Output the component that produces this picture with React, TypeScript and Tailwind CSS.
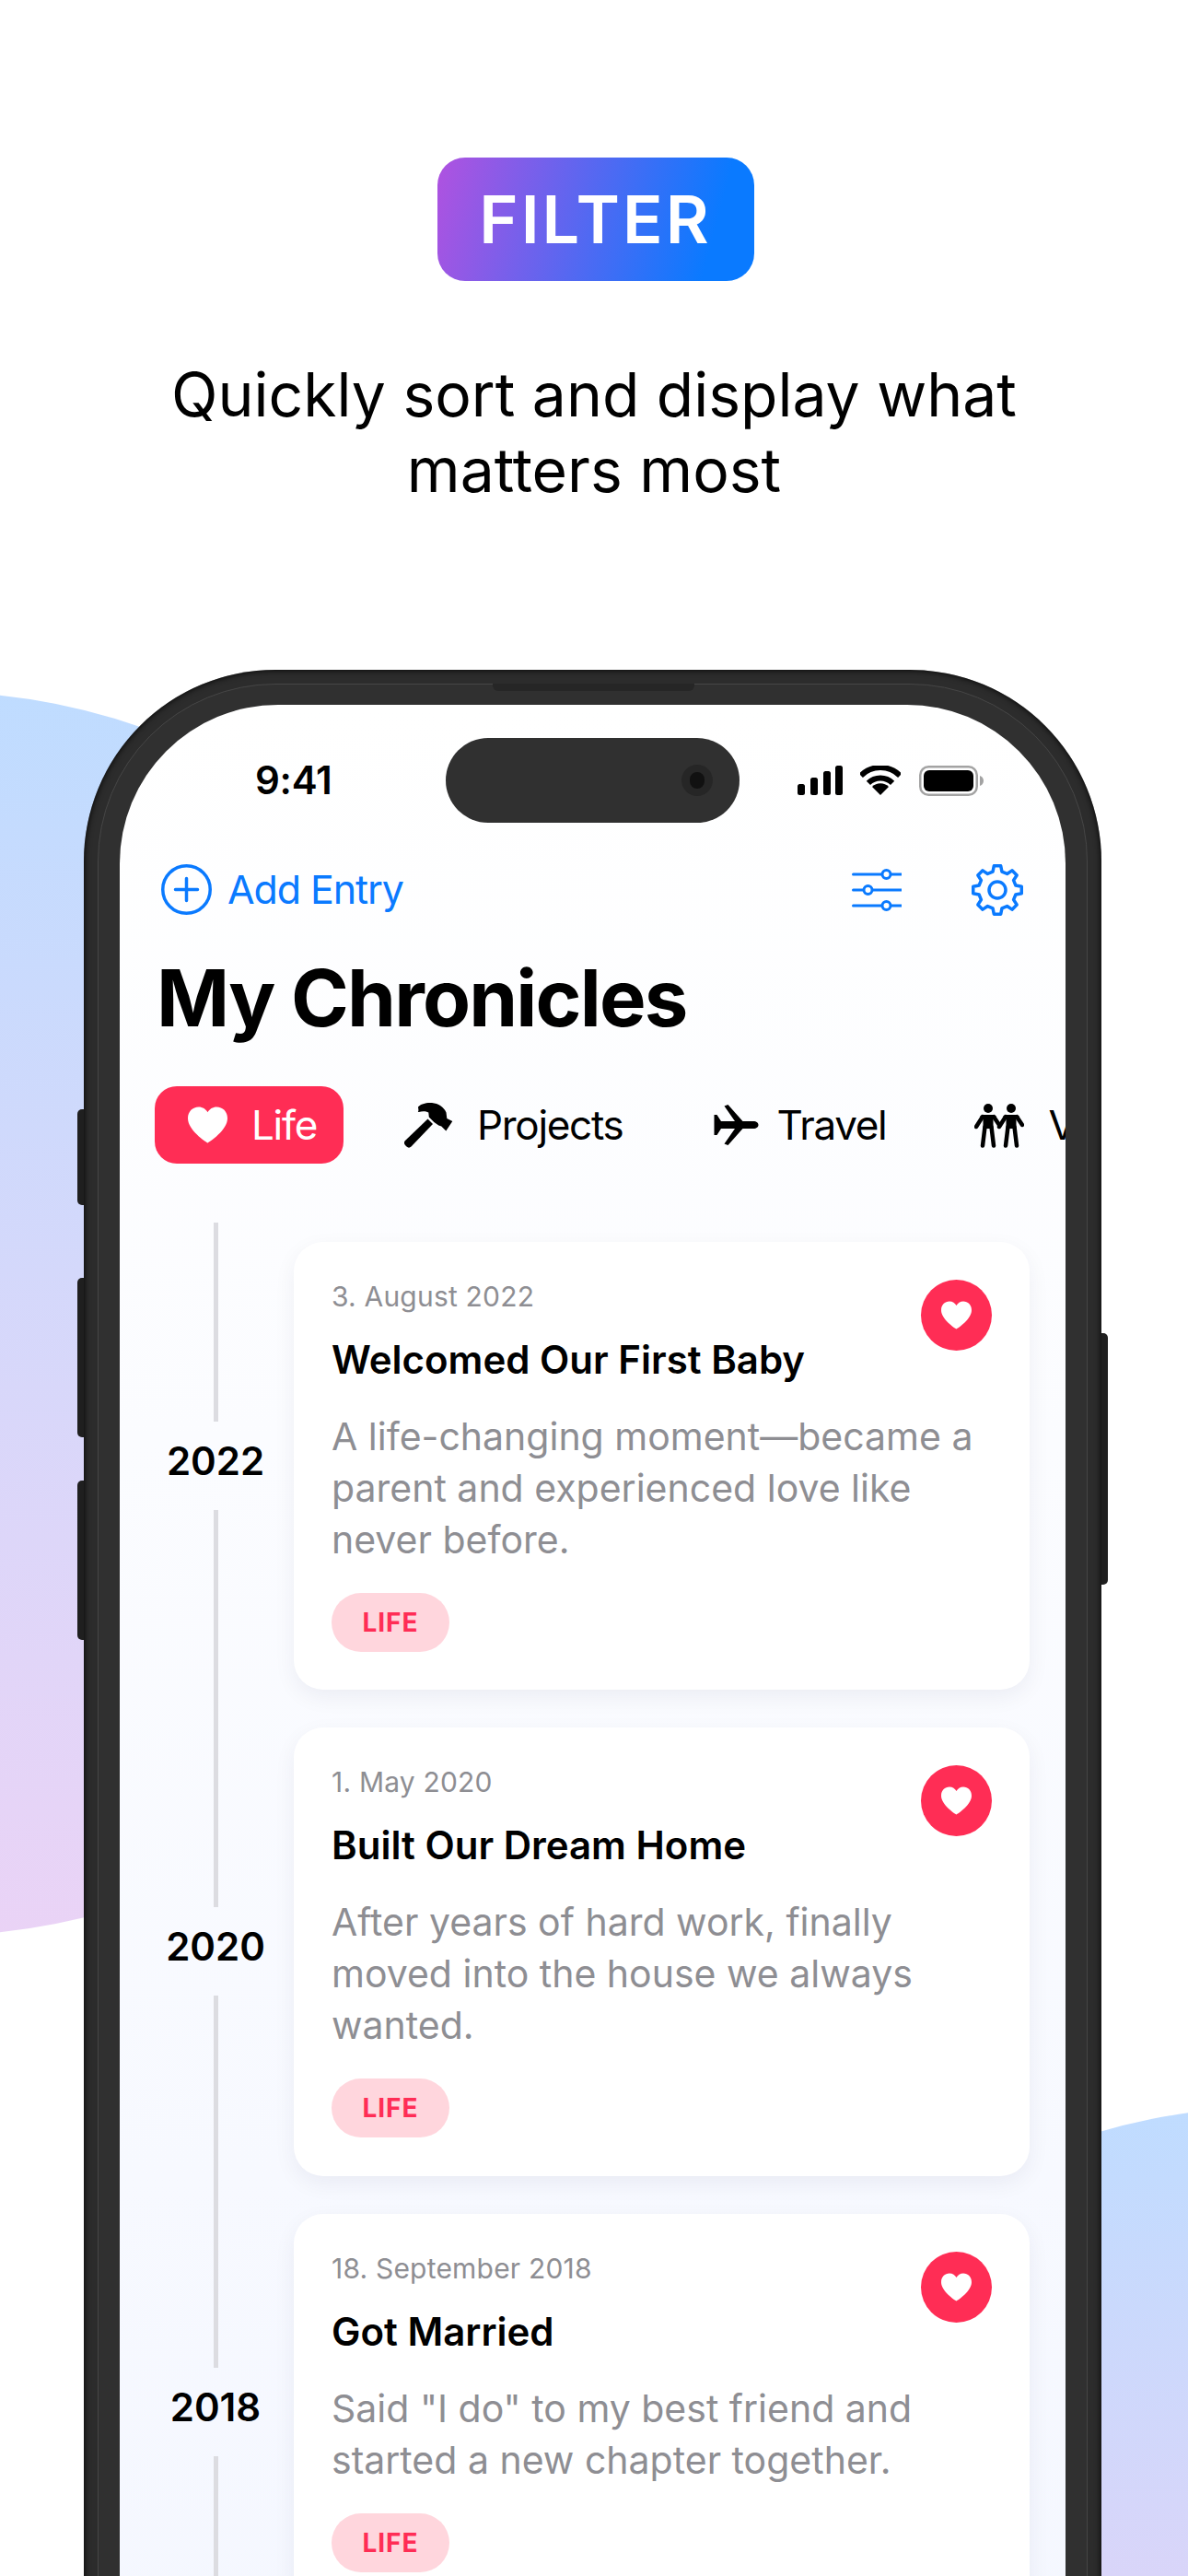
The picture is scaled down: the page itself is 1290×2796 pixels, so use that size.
const BLUE = '#0a7aff';

const entries = [
  {
    year: '2022',
    date: '3. August 2022',
    title: 'Welcomed Our First Baby',
    text: 'A life-changing moment—became a parent and experienced love like never before.',
  },
  {
    year: '2020',
    date: '1. May 2020',
    title: 'Built Our Dream Home',
    text: 'After years of hard work, finally moved into the house we always wanted.',
  },
  {
    year: '2018',
    date: '18. September 2018',
    title: 'Got Married',
    text: 'Said "I do" to my best friend and started a new chapter together.',
  },
];

function gearPath() {
  const pts: string[] = [];
  for (let i = 0; i < 8; i++) {
    const a = (i * 45 - 90) * (Math.PI / 180);
    const step = Math.PI / 180;
    const p = (r: number, d: number) => `${(29 + r * Math.cos(a + d * step)).toFixed(2)} ${(29 + r * Math.sin(a + d * step)).toFixed(2)}`;
    pts.push(`${i === 0 ? 'M' : 'L'}${p(20.5, -14)}`, `L${p(26.5, -8)}`, `L${p(26.5, 8)}`, `L${p(20.5, 14)}`);
  }
  return pts.join(' ') + ' Z';
}

function Heart({ className }: { className: string }) {
  return (
    <svg viewBox="0 0 44 40" className={className} fill="currentColor">
      <path d="M22 40C20 38.6 0 26 0 12.5 0 5 5.4 0 12 0c4.4 0 8 2.3 10 6 2-3.700 5.600-6 10-6 6.600 0 12 5 12 12.500C44 26 24 38.600 22 40Z" />
    </svg>
  );
}

function Hammer() {
  return (
    <svg viewBox="10 10 54 52" className="h-[52px] w-[54px] shrink-0" fill="black">
      <path d="M25 16.500C28 13 34 11.500 40 12c7 .6 13 4.500 15.500 10.500l.8 6.500 6 3-7 10.500-5-5-3-1-5-3.500-5.500-5.500-.5-5c-3-1.500-7-1.500-10.500-.5-1 0-1.300-1-.3-1.500Z" />
      <path d="M35.500 29.500 41 35 17.500 59.500c-1.500 1.500-3.500 1.500-5 0l-1.500-1.500c-1.500-1.500-1.500-3.500 0-5Z" />
    </svg>
  );
}

function Plane() {
  return (
    <svg viewBox="10 13 49 46" className="h-[46px] w-[49px] shrink-0" fill="black">
      <path d="M10.500 25H13.500L18 32H33L21.500 15.500 25.500 14 41.500 32H53C56.500 32 58.500 34 58.500 36S56.500 40 53 40H41.500L25.500 58 21.500 56.500 33 40H18L13.500 47H10.500Z" />
    </svg>
  );
}

function Figure({ x }: { x: number }) {
  return (
    <g transform={`translate(${x} 0)`}>
      <circle cx="0" cy="16" r="5" fill="black" />
      <path d="M-5 23H5C7 23 8 24 9 25L-1 25H-9C-8 24-7 23-5 23Z" fill="black" />
      <path d="M-5.500 24H5.500V38H-5.500Z" fill="black" />
      <path d="M-3.500 36-6 56.500M3.500 36 6 56.500M-6 25-13 36M6 25 12 34" stroke="black" strokeWidth="4.500" strokeLinecap="round" fill="none" />
    </g>
  );
}

function People() {
  return (
    <svg viewBox="8 10 54 49" className="h-[49px] w-[54px] shrink-0">
      <Figure x={23} />
      <Figure x={48} />
    </svg>
  );
}

function StatusIcons() {
  return (
    <div className="flex items-center gap-[19px]">
      <svg width="49" height="32" viewBox="0 0 49 32" fill="black">
        <rect x="0" y="20" width="8" height="12" rx="2.500" />
        <rect x="14" y="13" width="8" height="19" rx="2.500" />
        <rect x="28" y="6" width="8" height="26" rx="2.500" />
        <rect x="41" y="0" width="8" height="32" rx="2.500" />
      </svg>
      <svg width="44" height="32" viewBox="0 0 44 32">
        <path d="M.800 10.800A30 30 0 0 1 43.200 10.800" stroke="black" strokeWidth="6" fill="none" />
        <path d="M8.900 18.900A18.500 18.500 0 0 1 35.100 18.900" stroke="black" strokeWidth="6" fill="none" />
        <path d="M22 32 13 23A12.700 12.700 0 0 1 31 23Z" fill="black" />
      </svg>
      <svg width="70" height="33" viewBox="0 0 70 33" className="ml-px">
        <rect x="1.250" y="1.250" width="61.500" height="30.500" rx="9" stroke="#a3a3a3" strokeWidth="2.500" fill="none" />
        <rect x="5" y="5" width="54" height="23" rx="6" fill="black" />
        <path d="M66 11c2 .5 4 2.500 4 5.500s-2 5-4 5.500Z" fill="#a3a3a3" />
      </svg>
    </div>
  );
}

function Toolbar() {
  return (
    <div className="mt-[44px] flex h-[57px] items-center pl-[45px] pr-[45px] text-[#0a7aff]">
      <svg width="55" height="55" viewBox="0 0 55 55" fill="none" stroke={BLUE} strokeWidth="3.500" strokeLinecap="round">
        <circle cx="27.500" cy="27.500" r="25.750" />
        <path d="M15.500 27.500h24M27.500 15.500v24" />
      </svg>
      <span className="ml-[17px] text-[43px] leading-none tracking-[-1.1px]">Add Entry</span>
      <svg width="54" height="46" viewBox="0 0 54 46" fill="none" stroke={BLUE} strokeWidth="3" strokeLinecap="round" className="ml-auto">
        <path d="M1.500 6h52M1.500 23h52M1.500 40h52" />
        <circle cx="37.500" cy="6" r="4.500" fill="white" />
        <circle cx="17.500" cy="23" r="4.500" fill="white" />
        <circle cx="37.500" cy="40" r="4.500" fill="white" />
      </svg>
      <svg width="58" height="58" viewBox="0 0 58 58" fill="none" stroke={BLUE} strokeWidth="3.500" strokeLinejoin="round" className="ml-[75px]">
        <path d={gearPath()} />
        <circle cx="29" cy="29" r="9" />
      </svg>
    </div>
  );
}

function Tabs() {
  return (
    <div className="mt-[45px] flex h-[84px] items-center gap-[30px] pl-[38px] text-[44px] leading-none tracking-[-1.3px] text-black">
      <div className="flex h-[84px] shrink-0 items-center gap-[26px] rounded-[24px] bg-[#ff2d55] pl-[36px] pr-[29px] text-white">
        <Heart className="h-[40px] w-[43px] shrink-0" />
        <span>Life</span>
      </div>
      <div className="flex shrink-0 items-center gap-[25px] pl-[36px] pr-[32px]">
        <Hammer />
        <span>Projects</span>
      </div>
      <div className="flex shrink-0 items-center gap-[20px] pl-[36px] pr-[32px]">
        <Plane />
        <span>Travel</span>
      </div>
      <div className="flex shrink-0 items-center gap-[26px] pl-[34px] pr-[32px]">
        <People />
        <span>Vows</span>
      </div>
    </div>
  );
}

function EntryRow({ entry }: { entry: (typeof entries)[number] }) {
  return (
    <div className="flex gap-[5px] pl-[24px]">
      <div className="flex w-[160px] shrink-0 flex-col items-center">
        <div className="w-[5px] flex-1 bg-[#dcdce1]" />
        <div className="flex h-[96px] items-center pb-[10px] text-[42px] font-semibold leading-none text-black">{entry.year}</div>
        <div className="w-[5px] flex-1 bg-[#dcdce1]" />
      </div>
      <div className="py-[20.5px]">
        <div className="relative w-[799px] rounded-[32px] bg-white pb-[41.5px] pl-[41px] pr-[42px] pt-[39px] shadow-[0_8px_24px_rgba(20,20,60,0.06)]">
          <div className="text-[30px] leading-[40px] tracking-[0.2px] text-[#8e8e93]">{entry.date}</div>
          <div className="mt-[25px] text-[42px] font-semibold leading-[48px] text-black">{entry.title}</div>
          <p className="mt-[31px] text-[41px] leading-[56px] text-[#8e8e93]">{entry.text}</p>
          <div className="mt-[30px] flex h-[64px] w-[128px] items-center justify-center rounded-[32px] bg-[#ffd6dd] text-[28px] font-bold tracking-[1px] text-[#ff2d55]">
            LIFE
          </div>
          <div className="absolute right-[41px] top-[41px] flex h-[77px] w-[77px] items-center justify-center rounded-full bg-[#ff2d55] text-white">
            <Heart className="h-[31px] w-[33px]" />
          </div>
        </div>
      </div>
    </div>
  );
}

export default function App() {
  return (
    <div className="relative h-[2796px] w-[1290px] overflow-hidden bg-white font-[family-name:Inter,sans-serif] text-black">
      {/* background blobs */}
      <div className="absolute left-[-746px] top-[751px] h-[1350px] w-[1350px] rounded-full bg-gradient-to-b from-[#bfdcff] to-[#ead3f6]" />
      <div className="absolute left-[712px] top-[2287px] h-[1340px] w-[1340px] rounded-full bg-[linear-gradient(180deg,#bfdcff_0%,#d9d5f9_38%)]" />

      <div className="relative">
        <div className="flex justify-center pl-[3px] pt-[171px]">
          <div className="flex h-[134px] w-[344px] items-center justify-center rounded-[30px] bg-[linear-gradient(105deg,#b052e0_0%,#0a7aff_85%)] text-[72px] font-semibold tracking-[3px] text-white">
            FILTER
          </div>
        </div>
        <p className="mx-auto mt-[82px] w-[1000px] text-center text-[66px] leading-[82px]">
          Quickly sort and display what matters most
        </p>

        {/* phone */}
        <div className="relative ml-[91px] mt-[176px] w-[1105px]">
          <div className="absolute left-[-7px] top-[477px] h-[104px] w-[12px] rounded-l-[5px] bg-[#1f1f1f]" />
          <div className="absolute left-[-7px] top-[660px] h-[173px] w-[12px] rounded-l-[5px] bg-[#1f1f1f]" />
          <div className="absolute left-[-7px] top-[880px] h-[173px] w-[12px] rounded-l-[5px] bg-[#1f1f1f]" />
          <div className="absolute right-[-7px] top-[720px] h-[273px] w-[12px] rounded-r-[5px] bg-[#1f1f1f]" />

          <div className="relative rounded-[208px] bg-[#2c2c2c] p-[15px] shadow-[inset_0_0_7px_#000]">
            <div className="relative rounded-[193px] border border-[#464646] bg-[#303030] px-[23px] pb-[23px] pt-[22px]">
              <div className="absolute left-[428px] top-[-1px] h-[8px] w-[219px] rounded-b-[6px] bg-[#262626]" />
              <div className="relative h-[2400px] overflow-hidden rounded-[172px] bg-gradient-to-b from-white to-[#f3f6ff]">
                {/* dynamic island */}
                <div className="absolute left-[354px] top-[36px] h-[92px] w-[319px] rounded-full bg-[#303030]">
                  <div className="absolute left-[256px] top-[29px] flex h-[34px] w-[34px] items-center justify-center rounded-full bg-[#262626]">
                    <div className="h-[18px] w-[16px] rounded-full bg-[#111111]" />
                  </div>
                </div>

                <div className="mt-[36px] flex h-[92px] items-center justify-between pl-[147px] pr-[89px]">
                  <span className="text-[42px] font-semibold leading-none tracking-[-0.3px]">9:41</span>
                  <StatusIcons />
                </div>
                <Toolbar />
                <h1 className="mt-[40px] pl-[40px] text-[85px] font-bold leading-[100px] tracking-[-1.8px] text-black">My Chronicles</h1>
                <Tabs />
                <div className="mt-[64px]">
                  {entries.map(e => (
                    <EntryRow key={e.year} entry={e} />
                  ))}
                </div>
              </div>
            </div>
          </div>
        </div>
      </div>
    </div>
  );
}
